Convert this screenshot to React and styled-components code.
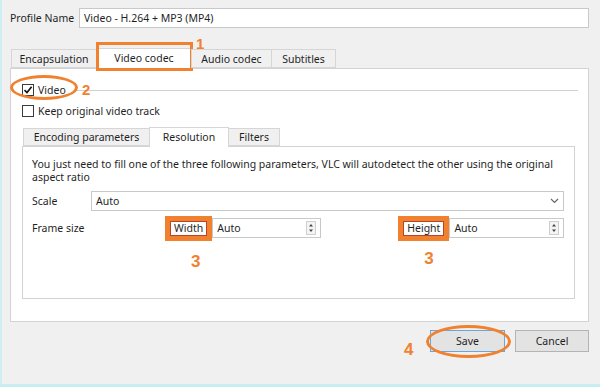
import React from "react";
import styled, { createGlobalStyle } from "styled-components";

const ORANGE = "#f0812f";

const GlobalStyle = createGlobalStyle`
  html, body {
    margin: 0;
    padding: 0;
  }
  body {
    font-family: "Noto Sans", "Open Sans", sans-serif;
    font-size: 10.5px;
    color: #1f1f1f;
  }
`;

const Window = styled.div`
  width: 600px;
  height: 387px;
  box-sizing: border-box;
  background: #f0f0f0;
  border-left: 2px solid #cdeff1;
  border-bottom: 3px solid #c6eef0;
  padding: 8px 11px 0 8px;
  display: flex;
  flex-direction: column;
`;

const FieldRow = styled.div`
  display: flex;
  align-items: center;
  height: 20px;
  margin-top: ${(p) => p.$top || 0}px;
`;

const FieldLabel = styled.span`
  width: ${(p) => p.$width}px;
  flex-shrink: 0;
  white-space: nowrap;
`;

const TextBox = styled.div`
  flex: ${(p) => (p.$width ? "none" : 1)};
  width: ${(p) => (p.$width ? `${p.$width}px` : "auto")};
  height: 20px;
  box-sizing: border-box;
  background: #fff;
  border: 1px solid #c9c9c9;
  padding: 0 4px;
  display: flex;
  align-items: center;
  justify-content: space-between;
  white-space: nowrap;
`;

const TabStrip = styled.div`
  display: flex;
  align-items: flex-end;
  height: ${(p) => p.$height}px;
  margin-top: ${(p) => p.$top}px;
  padding-left: 2px;
  position: relative;
  z-index: 1;
`;

const Tab = styled.div`
  position: relative;
  width: ${(p) => p.$width}px;
  height: ${(p) => (p.$active ? p.$h + 2 : p.$h)}px;
  margin-bottom: ${(p) => (p.$active ? -1 : 0)}px;
  box-sizing: border-box;
  border: 1px solid #d6d6d6;
  border-bottom: ${(p) => (p.$active ? "none" : "1px solid #d6d6d6")};
  margin-left: -1px;
  background: ${(p) => (p.$active ? "#fff" : "#f0f0f0")};
  display: flex;
  align-items: center;
  justify-content: center;
  padding-bottom: ${(p) => (p.$active ? 2 : 0)}px;
  white-space: nowrap;
`;

const TabMark = styled.span`
  position: absolute;
  left: -1px;
  right: -2px;
  top: -7px;
  bottom: -2px;
  border: 3px solid ${ORANGE};
  pointer-events: none;
`;

const Step = styled.span`
  position: absolute;
  left: ${(p) => p.$left}px;
  top: ${(p) => p.$top}px;
  font-family: "Liberation Sans", Arial, sans-serif;
  font-weight: bold;
  font-size: ${(p) => p.$size || 17}px;
  line-height: 1;
  color: ${ORANGE};
`;

const Ring = styled.span`
  position: absolute;
  left: ${(p) => p.$left}px;
  top: ${(p) => p.$top}px;
  width: ${(p) => p.$w}px;
  height: ${(p) => p.$h}px;
  box-sizing: border-box;
  border: 3px solid ${ORANGE};
  border-radius: 50%;
  pointer-events: none;
`;

const Panel = styled.div`
  background: #fff;
  border: 1px solid #d3d3d3;
  box-sizing: border-box;
  height: ${(p) => p.$height}px;
  padding: ${(p) => p.$pad};
  display: flex;
  flex-direction: column;
`;

const CheckRow = styled.div`
  position: relative;
  display: flex;
  align-items: center;
  height: 14px;
  margin-top: ${(p) => p.$top}px;
`;

const Box = styled.span`
  width: 12px;
  height: 12px;
  box-sizing: border-box;
  border: 1px solid #3a3a3a;
  background: #fff;
  display: flex;
  align-items: center;
  justify-content: center;
  margin-right: 4px;
`;

const Rule = styled.span`
  flex: 1;
  height: 1px;
  background: #d0d0d0;
  margin: 0 -3px 0 10px;
`;

const Hint = styled.p`
  margin: 0;
  line-height: 13px;
`;

const Highlight = styled.div`
  position: relative;
  height: 25px;
  box-sizing: border-box;
  border: 5px solid ${ORANGE};
  display: flex;
  align-items: center;
  margin-left: ${(p) => p.$left || 0}px;
  z-index: 1;
`;

const Tag = styled.span`
  background: #fff;
  border: 1px solid #b8432a;
  padding: 0 3px;
  line-height: 13px;
`;

const Footer = styled.div`
  display: flex;
  justify-content: flex-end;
  gap: 10px;
  margin-top: 8px;
`;

const Button = styled.div`
  position: relative;
  width: ${(p) => p.$width}px;
  height: 22px;
  box-sizing: border-box;
  background: #e3e3e3;
  border: 1px solid ${(p) => (p.$default ? "#6aa7d8" : "#b4b4b4")};
  display: flex;
  align-items: center;
  justify-content: center;
`;

const Check = () => (
  <svg width="10" height="10" viewBox="0 0 10 10">
    <path d="M1.5 5.2 L4 7.6 L8.6 1.8" fill="none" stroke="#111" strokeWidth="1.6" />
  </svg>
);

const Chevron = () => (
  <svg width="9" height="6" viewBox="0 0 9 6">
    <path d="M1 1 L4.5 4.5 L8 1" fill="none" stroke="#666" strokeWidth="1.2" />
  </svg>
);

const Spin = () => (
  <svg width="10" height="14" viewBox="0 0 10 14">
    <rect x="0.5" y="0.5" width="9" height="13" fill="#f4f4f4" stroke="#cfcfcf" />
    <path d="M5 3 L7 5.5 L3 5.5 Z M5 11 L7 8.5 L3 8.5 Z" fill="#444" />
  </svg>
);

const Checkbox = ({ checked, children }) => (
  <>
    <Box>{checked && <Check />}</Box>
    <span>{children}</span>
  </>
);

export default function App() {
  return (
    <Window>
      <GlobalStyle />
      <FieldRow>
        <FieldLabel $width={69}>Profile Name</FieldLabel>
        <TextBox>Video - H.264 + MP3 (MP4)</TextBox>
      </FieldRow>

      <TabStrip $height={20} $top={20}>
        <Tab $width={86} $h={19}>Encapsulation</Tab>
        <Tab $width={96} $h={19} $active>
          Video codec
          <TabMark />
          <Step $left={99} $top={-13} $size={15}>1</Step>
        </Tab>
        <Tab $width={81} $h={19}>Audio codec</Tab>
        <Tab $width={65} $h={19}>Subtitles</Tab>
      </TabStrip>

      <Panel $height={254} $pad="0 13px 0 11px">
        <CheckRow $top={14}>
          <Checkbox checked>Video</Checkbox>
          <Rule />
          <Ring $left={-12} $top={-8} $w={68} $h={25} />
          <Step $left={60} $top={-1} $size={15}>2</Step>
        </CheckRow>
        <CheckRow $top={7}>
          <Checkbox>Keep original video track</Checkbox>
        </CheckRow>

        <TabStrip $height={19} $top={9}>
          <Tab $width={127} $h={18}>Encoding parameters</Tab>
          <Tab $width={80} $h={18} $active>Resolution</Tab>
          <Tab $width={52} $h={18}>Filters</Tab>
        </TabStrip>

        <Panel $height={153} $pad="11px 10px 0 9px">
          <Hint>
            You just need to fill one of the three following parameters, VLC will autodetect the other using the original
            <br />
            aspect ratio
          </Hint>
          <FieldRow $top={7}>
            <FieldLabel $width={59}>Scale</FieldLabel>
            <TextBox>
              Auto
              <Chevron />
            </TextBox>
          </FieldRow>
          <FieldRow $top={7}>
            <FieldLabel $width={133}>Frame size</FieldLabel>
            <Highlight>
              <Tag>Width</Tag>
              <Step $left={21} $top={32}>3</Step>
            </Highlight>
            <TextBox $width={109}>
              Auto
              <Spin />
            </TextBox>
            <Highlight $left={77}>
              <Tag>Height</Tag>
              <Step $left={21} $top={29}>3</Step>
            </Highlight>
            <TextBox>
              Auto
              <Spin />
            </TextBox>
          </FieldRow>
        </Panel>
      </Panel>

      <Footer>
        <Button $width={75} $default>
          Save
          <Ring $left={-5} $top={-6} $w={85} $h={33} />
          <Step $left={-27} $top={10}>4</Step>
        </Button>
        <Button $width={74}>Cancel</Button>
      </Footer>
    </Window>
  );
}
